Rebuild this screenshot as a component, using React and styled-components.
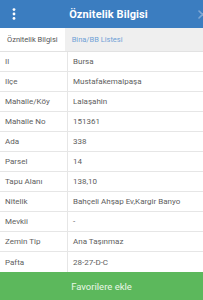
import React, { useState } from "react";
import styled, { createGlobalStyle } from "styled-components";

const GlobalStyle = createGlobalStyle`
    html, body {
        margin: 0;
        padding: 0;
        background: #fff;
        font-family: Roboto, "Liberation Sans", sans-serif;
    }
`;

const Screen = styled.div`
    width: 203px;
    height: 300px;
    display: flex;
    flex-direction: column;
    overflow: hidden;
    background: #fff;
`;

const Header = styled.header`
    height: 28px;
    flex: none;
    background: #3b7dc0;
    display: grid;
    grid-template-columns: 28px 1fr 14px;
    align-items: center;
    color: #fff;
    overflow: hidden;
`;

const MenuButton = styled.button`
    background: none;
    border: none;
    padding: 0;
    display: flex;
    justify-content: center;
    align-items: center;
    height: 28px;
`;

const Title = styled.h1`
    margin: 0;
    font-size: 11px;
    font-weight: 700;
    text-align: center;
    letter-spacing: 0.1px;
`;

const CloseButton = styled.button`
    justify-self: end;
    margin-right: -4px;
    background: none;
    border: none;
    padding: 0;
    display: flex;
    opacity: 0.55;
`;

const Tabs = styled.nav`
    height: 23px;
    flex: none;
    display: flex;
    background: #efefef;
    border-bottom: 1px solid #e2e2e2;
`;

const Tab = styled.button`
    border: none;
    padding: 0 ${(p) => (p.$active ? "7px" : "5px")};
    margin-left: ${(p) => (p.$active ? "0" : "2px")};
    background: ${(p) => (p.$active ? "#fff" : "transparent")};
    color: ${(p) => (p.$active ? "#555" : "#6fa1d6")};
    font-family: Roboto, "Liberation Sans", sans-serif;
    font-size: 7.5px;
    height: 100%;
`;

const Table = styled.div`
    flex: 1;
    display: flex;
    flex-direction: column;
`;

const Row = styled.div`
    height: 20px;
    flex: none;
    display: grid;
    grid-template-columns: 68px 1fr;
    border-bottom: ${(p) => (p.$last ? "none" : "1px solid #e6e6e6")};
    box-sizing: border-box;
    font-size: 8px;
    color: #5e5e5e;
`;

const Label = styled.div`
    padding-left: 5px;
    display: flex;
    align-items: center;
    border-right: 1px solid #e6e6e6;
`;

const Value = styled.div`
    padding-left: 5px;
    display: flex;
    align-items: center;
`;

const FavButton = styled.button`
    flex: none;
    height: 29px;
    border: none;
    background: #5cb85c;
    color: #e9f7e6;
    font-family: Roboto, "Liberation Sans", sans-serif;
    font-size: 9.5px;
`;

const rows = [
    ["Il", "Bursa"],
    ["Ilçe", "Mustafakemalpaşa"],
    ["Mahalle/Köy", "Lalaşahin"],
    ["Mahalle No", "151361"],
    ["Ada", "338"],
    ["Parsel", "14"],
    ["Tapu Alanı", "138,10"],
    ["Nitelik", "Bahçeli Ahşap Ev,Kargir Banyo"],
    ["Mevkii", "-"],
    ["Zemin Tip", "Ana Taşınmaz"],
    ["Pafta", "28-27-D-C"]
];

function DotsIcon() {
    return (
        <svg width="4" height="12" viewBox="0 0 4 12">
            <circle cx="2" cy="1.6" r="1.4" fill="#fff" />
            <circle cx="2" cy="6" r="1.4" fill="#fff" />
            <circle cx="2" cy="10.4" r="1.4" fill="#fff" />
        </svg>
    );
}

function CloseIcon() {
    return (
        <svg width="9" height="9" viewBox="0 0 9 9">
            <path
                d="M1 1 L8 8 M8 1 L1 8"
                stroke="#b8cbe4"
                strokeWidth="1.6"
                strokeLinecap="round"
            />
        </svg>
    );
}

export default function App() {
    const [tab, setTab] = useState("attr");

    return (
        <Screen>
            <GlobalStyle />
            <Header>
                <MenuButton type="button">
                    <DotsIcon />
                </MenuButton>
                <Title>Öznitelik Bilgisi</Title>
                <CloseButton type="button">
                    <CloseIcon />
                </CloseButton>
            </Header>
            <Tabs>
                <Tab $active={tab === "attr"} onClick={() => setTab("attr")}>
                    Öznitelik Bilgisi
                </Tab>
                <Tab $active={tab === "bina"} onClick={() => setTab("bina")}>
                    Bina/BB Listesi
                </Tab>
            </Tabs>
            <Table>
                {rows.map(([label, value], i) => (
                    <Row key={label} $last={i === rows.length - 1}>
                        <Label>{label}</Label>
                        <Value>{value}</Value>
                    </Row>
                ))}
            </Table>
            <FavButton type="button">Favorilere ekle</FavButton>
        </Screen>
    );
}
